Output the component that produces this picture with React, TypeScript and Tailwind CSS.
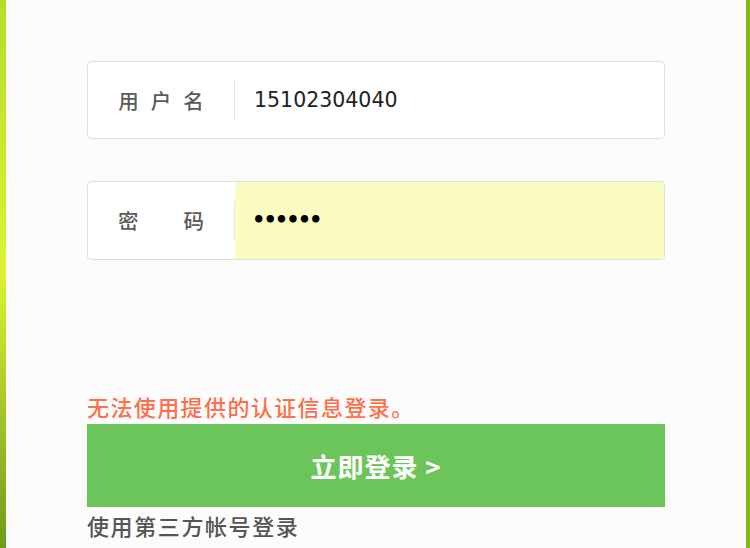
export default function App() {
  return (
    <div
      className="flex h-[548px] w-[750px] overflow-hidden bg-[#fcfcfc]"
      style={{ fontFamily: '"Noto Sans CJK SC", "Liberation Sans", sans-serif' }}
    >
      <div className="w-[6px] shrink-0 bg-gradient-to-b from-[#b2de2a] via-[#dcf42e] to-[#6f9a1c]" />
      <div className="flex flex-1 flex-col px-[81px] pt-[61px]">
        {/* Username */}
        <div className="flex h-[78px] items-center rounded-[4px] border border-[#dddddd] bg-white">
          <div className="flex w-[146px] items-center justify-center gap-[12px] text-[20.5px] font-medium text-[#5a5a5a]">
            <span>用</span>
            <span>户</span>
            <span>名</span>
          </div>
          <div className="h-[40px] w-px bg-[#e5e5e5]" />
          <div className="pl-[19px] text-[20.5px] text-[#222]" style={{ fontFamily: '"DejaVu Sans", sans-serif' }}>
            15102304040
          </div>
        </div>

        {/* Password */}
        <div className="mt-[42px] flex h-[79px] items-stretch overflow-hidden rounded-[4px] border border-[#dddddd] bg-white">
          <div className="flex w-[146px] items-center justify-center gap-[45px] text-[20.5px] font-medium text-[#5a5a5a]">
            <span>密</span>
            <span>码</span>
          </div>
          <div className="my-[19px] w-px bg-[#e5e5e5]" />
          <div
            className="flex flex-1 items-center bg-[#fafcc2] pl-[17px] text-[21px] font-bold tracking-[-2px] text-black"
            style={{ fontFamily: '"DejaVu Sans", sans-serif' }}
          >
            ••••••
          </div>
        </div>

        <div className="mt-[132px] text-[22px] font-medium leading-[28px] tracking-[1.4px] text-[#ff6f4a]">
          无法使用提供的认证信息登录。
        </div>

        <button className="mt-[4px] flex h-[83px] items-center justify-center bg-[#6cc55a] text-[26px] font-bold tracking-[1px] text-white">
          立即登录 &gt;
        </button>

        <div className="mt-[4px] text-[22px] font-medium leading-[28px] tracking-[1.6px] text-[#555]">使用第三方帐号登录</div>
      </div>
      <div className="w-[4px] shrink-0 bg-[#7cb81e]" />
    </div>
  );
}
